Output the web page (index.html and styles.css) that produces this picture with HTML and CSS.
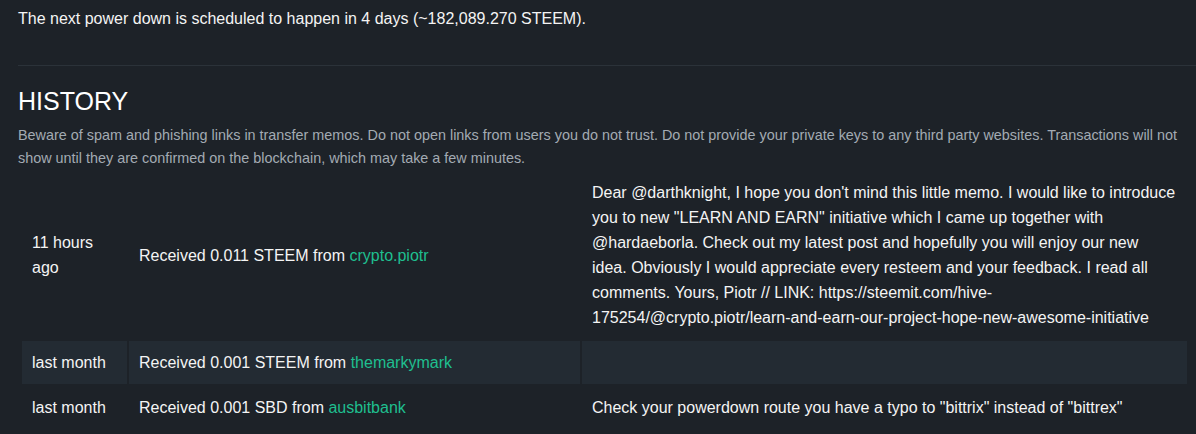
FILE: index.html
```html
<!DOCTYPE html>
<html lang="en">
<head>
<meta charset="utf-8">
<title>Wallet history</title>
<link rel="stylesheet" href="styles.css">
</head>
<body>
  <div class="wallet">
    <p class="powerdown">The next power down is scheduled to happen in 4 days (~182,089.270 STEEM).</p>
    <hr class="divider">
    <h4 class="history-title">HISTORY</h4>
    <p class="warning">Beware of spam and phishing links in transfer memos. Do not open links from users you do not trust. Do not provide your private keys to any third party websites. Transactions will not show until they are confirmed on the blockchain, which may take a few minutes.</p>
    <table class="history">
      <tbody>
        <tr>
          <td class="when">11 hours ago</td>
          <td class="what">Received 0.011 STEEM from <a href="#">crypto.piotr</a></td>
          <td class="memo">Dear @darthknight, I hope you don't mind this little memo. I would like to introduce you to new "LEARN AND EARN" initiative which I came up together with @hardaeborla. Check out my latest post and hopefully you will enjoy our new idea. Obviously I would appreciate every resteem and your feedback. I read all comments. Yours, Piotr // LINK: https://steemit.com/hive-175254/@crypto.piotr/learn-and-earn-our-project-hope-new-awesome-initiative</td>
        </tr>
        <tr class="odd">
          <td class="when">last month</td>
          <td class="what">Received 0.001 STEEM from <a href="#">themarkymark</a></td>
          <td class="memo"></td>
        </tr>
        <tr>
          <td class="when">last month</td>
          <td class="what">Received 0.001 SBD from <a href="#">ausbitbank</a></td>
          <td class="memo">Check your powerdown route you have a typo to "bittrix" instead of "bittrex"</td>
        </tr>
      </tbody>
    </table>
  </div>
</body>
</html>
```

FILE: styles.css
```css
body {
    margin: 0;
    background: #1d2228;
    color: #f4f4f4;
    font-family: "Liberation Sans", Arial, sans-serif;
}
.wallet {
    padding: 6px 0 0 18px;
}
.powerdown {
    margin: 0;
    font-size: 16px;
    line-height: 25px;
}
.divider {
    margin: 34px 0 0 0;
    border: 0;
    border-top: 1px solid #2b3239;
}
.history-title {
    margin: 20px 0 0 0;
    font-size: 25px;
    font-weight: normal;
    line-height: 30px;
    color: #fff;
}
.warning {
    margin: 8px 0 0 0;
    padding-right: 14px;
    font-size: 14.4px;
    line-height: 23px;
    color: #a3abb3;
}
table.history {
    border-spacing: 2px;
    margin: -1px 0 0 2px;
    width: 1169px;
    font-size: 16px;
    line-height: 25px;
}
table.history td {
    padding: 9px 10px;
    vertical-align: middle;
}
td.when {
    width: 85px;
}
td.what {
    width: 431px;
}
tr.odd td {
    background: #232b33;
}
table.history a {
    color: #1fbf8f;
    text-decoration: none;
}
```
